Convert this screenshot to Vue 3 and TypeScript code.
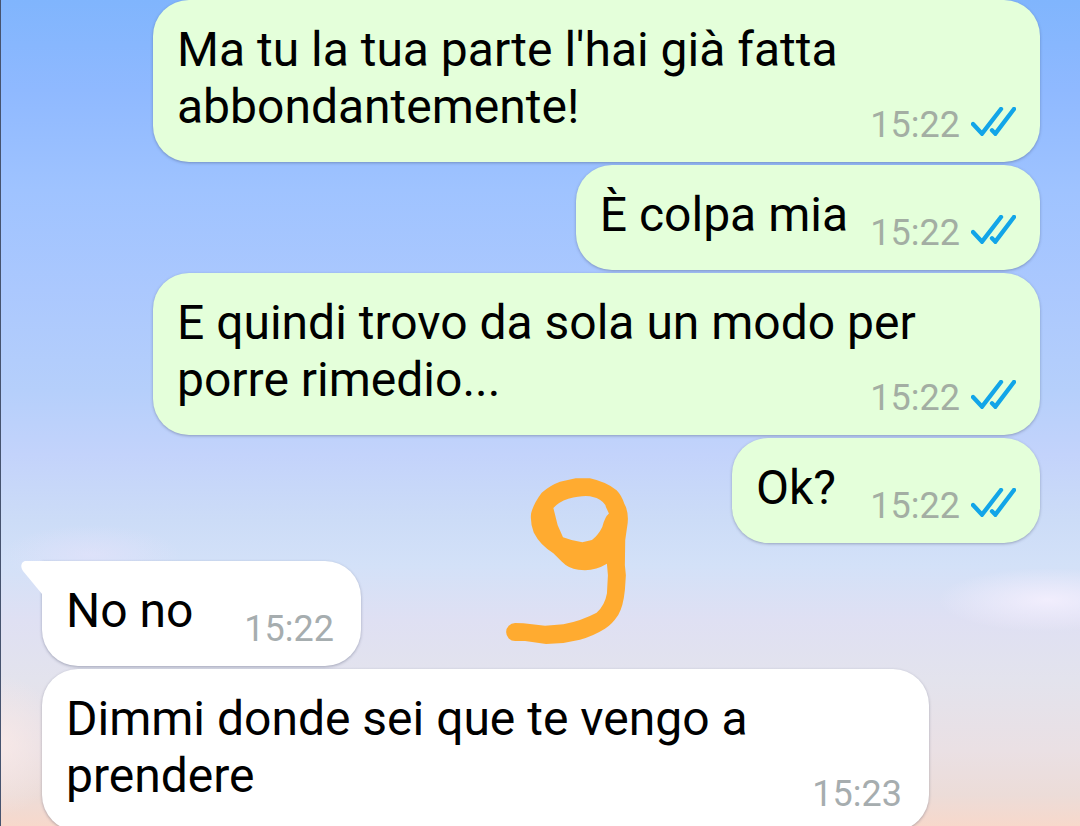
<script setup lang="ts">
interface Message {
  id: number
  text: string
  time: string
  outgoing: boolean
  startsGroup?: boolean
}

const messages: Message[] = [
  { id: 1, text: "Ma tu la tua parte l'hai già fatta abbondantemente!", time: '15:22', outgoing: true },
  { id: 2, text: 'È colpa mia', time: '15:22', outgoing: true },
  { id: 3, text: 'E quindi trovo da sola un modo per porre rimedio...', time: '15:22', outgoing: true },
  { id: 4, text: 'Ok?', time: '15:22', outgoing: true },
  { id: 5, text: 'No no', time: '15:22', outgoing: false, startsGroup: true },
  { id: 6, text: 'Dimmi donde sei que te vengo a prendere', time: '15:23', outgoing: false },
]
</script>

<template>
  <main class="chat">
    <ol class="messages">
      <li
        v-for="message in messages"
        :key="message.id"
        class="bubble"
        :class="{ out: message.outgoing, in: !message.outgoing, first: message.startsGroup }"
      >
        <svg v-if="message.startsGroup" class="tail" viewBox="0 0 45 36" aria-hidden="true">
          <path d="M45 0H5C0 0-1 6 2 10L21 33L45 36Z" />
        </svg>
        <p class="text">{{ message.text }}<span class="spacer"></span></p>
        <div class="meta">
          <time>{{ message.time }}</time>
          <svg v-if="message.outgoing" class="ticks" viewBox="332 50 135 87" role="img" aria-label="Letto">
            <path d="M338 101L365 130L422 56M395 120L405 130L461 56" />
          </svg>
        </div>
      </li>
    </ol>
    <svg class="drawing" viewBox="48 53 369 499" aria-hidden="true">
      <path
        fill-rule="evenodd"
        d="M75 489L100 490L165 497L220 493Q275 482 320 458Q345 435 351 400L354 345L351 311Q320 330 285 330L265 329Q235 325 215 304L190 279Q150 255 131 217Q120 190 123 160Q130 130 155 97Q180 75 210 64L257 54L300 54Q350 65 380 90Q395 105 403 130Q420 160 411 205L406 240L405 315L408 345L405 390Q400 440 385 465Q365 495 345 506Q310 528 270 539L220 549L168 552L105 543L75 543A27 27 0 0 1 75 489ZM190 143Q205 125 235 115Q275 105 300 108L320 113Q345 125 348 140L357 160Q345 170 337 200Q325 225 306 239L277 246Q250 243 219 231L203 195Z"
      />
    </svg>
  </main>
</template>

<style>
body {
  margin: 0;
}
</style>

<style scoped>
.chat {
  position: relative;
  box-sizing: border-box;
  height: 100vh;
  overflow: hidden;
  border-left: 1px solid #46536f;
  font-family: Roboto, "Liberation Sans", sans-serif;
  background:
    radial-gradient(ellipse 110px 32px at 97% 600px, rgba(247, 241, 255, 0.8), rgba(247, 241, 255, 0)),
    radial-gradient(ellipse 90px 30px at 90px 555px, rgba(226, 226, 250, 0.7), rgba(226, 226, 250, 0)),
    radial-gradient(ellipse 60px 70px at 0 745px, rgba(250, 234, 232, 0.8), rgba(250, 234, 232, 0)),
    linear-gradient(
      #80b5fd 0,
      #8fb9ff 90px,
      #9fc3ff 190px,
      #abc8fe 290px,
      #b5cffb 390px,
      #c3d3fb 455px,
      #ccdcf7 520px,
      #d3e1f8 565px,
      #dfe0f3 620px,
      #e3e3ed 680px,
      #eae0e4 750px,
      #ecdcd8 795px,
      #f7d8cb 826px
    );
}

.messages {
  display: flex;
  flex-direction: column;
  gap: 3px;
  margin: 0;
  padding: 0 40px 0 41px;
  list-style: none;
}

.bubble {
  position: relative;
  display: grid;
  box-sizing: border-box;
  max-width: min(90%, 887px);
  border-radius: 36px;
  box-shadow: 0 1px 3px rgba(40, 50, 80, 0.35);
}

.out {
  align-self: flex-end;
  min-width: 308px;
  padding: 0 24px;
  background: #e4ffda;
}

.in {
  align-self: flex-start;
  min-width: 319px;
  padding: 0 27px 0 24px;
  background: #fff;
}

.first {
  margin-top: 15px;
  border-top-left-radius: 0;
}

.tail {
  position: absolute;
  top: 0;
  left: -21px;
  width: 45px;
  height: 36px;
  fill: #fff;
}

.text,
.meta {
  grid-area: 1 / 1;
}

.text {
  position: relative;
  margin: 0;
  padding: 21px 0 27px;
  font-size: 48px;
  line-height: 57px;
  color: #000;
}

.spacer {
  display: inline-block;
  width: 114px;
  height: 1px;
}

.out .spacer {
  width: 168px;
}

.meta {
  display: flex;
  align-self: end;
  justify-self: end;
  gap: 11px;
  padding-bottom: 16px;
  font-size: 36px;
  line-height: 42px;
  color: #a6adaf;
}

.out .meta {
  color: #a3aea3;
}

.ticks {
  width: 45px;
  height: 29px;
  margin-top: 3px;
  fill: none;
  stroke: #12a5e8;
  stroke-width: 13;
  stroke-linejoin: miter;
  stroke-linecap: round;
}

.drawing {
  position: absolute;
  top: 478px;
  left: 505px;
  width: 123px;
  height: 166px;
  fill: #ffab30;
}
</style>
